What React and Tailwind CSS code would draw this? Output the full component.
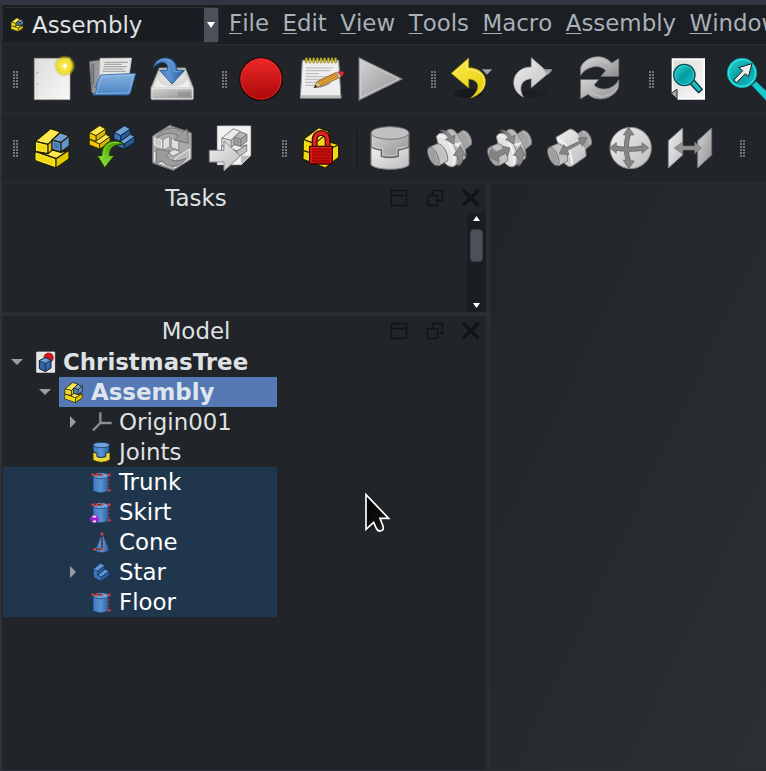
import React from 'react';

// Drawing units are a third of a pixel, measured from the origin (ox, oy).
function Icon({ x, y, w, h, ox = 0, oy = 0, children }) {
  return (
    <svg
      className="block shrink-0"
      width={w}
      height={h}
      viewBox={`${(x - ox) * 3} ${(y - oy) * 3} ${w * 3} ${h * 3}`}
      strokeLinejoin="round"
    >
      {children}
    </svg>
  );
}

function Defs() {
  return (
    <svg className="absolute" width="0" height="0">
      <defs>
        <linearGradient id="paper" x1="0" y1="0" x2="1" y2="1">
          <stop offset="0" stopColor="#dcdcda" />
          <stop offset="1" stopColor="#f8f8f8" />
        </linearGradient>
        <radialGradient id="glow">
          <stop offset="0" stopColor="#fffbd8" />
          <stop offset=".25" stopColor="#fbe94e" />
          <stop offset=".65" stopColor="#f2dc20" stopOpacity=".95" />
          <stop offset="1" stopColor="#b8a810" stopOpacity="0" />
        </radialGradient>
        <linearGradient id="blue" x1="0" y1="0" x2="0" y2="1">
          <stop offset="0" stopColor="#86b2e0" />
          <stop offset="1" stopColor="#4a83c4" />
        </linearGradient>
        <linearGradient id="deep" x1="0" y1="0" x2="1" y2="0">
          <stop offset="0" stopColor="#3f78bb" />
          <stop offset=".5" stopColor="#5b93d3" />
          <stop offset="1" stopColor="#28599a" />
        </linearGradient>
        <linearGradient id="red" x1="0" y1="0" x2="0" y2="1">
          <stop offset="0" stopColor="#ef2929" />
          <stop offset="1" stopColor="#a90808" />
        </linearGradient>
        <linearGradient id="gray" x1="0" y1="0" x2="1" y2="1">
          <stop offset="0" stopColor="#d4d4d4" />
          <stop offset="1" stopColor="#909090" />
        </linearGradient>
        <linearGradient id="light" x1="0" y1="0" x2="1" y2="1">
          <stop offset="0" stopColor="#f0f0f0" />
          <stop offset="1" stopColor="#bcbcbc" />
        </linearGradient>
        <linearGradient id="yellow" x1="0" y1="0" x2="1" y2="1">
          <stop offset="0" stopColor="#fce94f" />
          <stop offset="1" stopColor="#e5ce0a" />
        </linearGradient>
        <linearGradient id="cyan" x1="0" y1="0" x2="1" y2="1">
          <stop offset="0" stopColor="#2fdce0" />
          <stop offset=".5" stopColor="#079c9f" />
          <stop offset="1" stopColor="#16c4c8" />
        </linearGradient>
        <linearGradient id="green" x1="0" y1="0" x2="0" y2="1">
          <stop offset="0" stopColor="#4e9a06" />
          <stop offset="1" stopColor="#8ae234" />
        </linearGradient>
        <linearGradient id="cursor" x1="0" y1="0" x2="1" y2="1">
          <stop offset="0" stopColor="#000" />
          <stop offset=".7" stopColor="#111" />
          <stop offset="1" stopColor="#555" />
        </linearGradient>
      </defs>
    </svg>
  );
}

function Handle({ x, w, y, cx }) {
  const rows = [0, 3, 6, 9, 12, 15];
  return (
    <svg className="block shrink-0" width={w} height="68" viewBox={`${x} ${y} ${w} 68`} fill="#73767a">
      {rows.map((r) => (
        <g key={r}>
          <rect x={cx - 2} y={y + 26 + r} width="2" height="2" />
          <rect x={cx + 1} y={y + 26 + r} width="2" height="2" />
        </g>
      ))}
    </svg>
  );
}

function T1({ x, w, ox = 0, children }) {
  return <Icon x={x} y={45} w={w} h={68} ox={ox}>{children}</Icon>;
}
function T2({ x, w, ox = 0, children }) {
  return <Icon x={x} y={114} w={w} h={68} ox={ox} oy={110}>{children}</Icon>;
}

// Three stacked bricks of the assembly workbench
function Bricks({ y1 = '#fce94f', y2 = '#f0d90f', y3 = '#e2c800', b1 = '#729fcf', b2 = '#4377b8', b3 = '#5f93cf', s = '#211f00', sw = 3.5 }) {
  return (
    <g stroke={s} strokeWidth={sw}>
      <path d="M106 124L144 131 156 120 183 127 207 121 168 146Z" fill={y1} />
      <path d="M105 124L168 146V174L105 152Z" fill={y2} />
      <path d="M168 146L207 121V147L168 174Z" fill={y3} />
      <path d="M106 94L152 56 181 66 144 103Z" fill={y1} />
      <path d="M106 94L144 103V131L106 124Z" fill={y2} />
      <path d="M144 103L156 92V121L144 131Z" fill={y3} />
      <path d="M156 90L181 68 208 78 183 98Z" fill={b1} />
      <path d="M156 90L183 98V126L156 118Z" fill={b2} />
      <path d="M183 98L208 78V107L183 126Z" fill={b3} />
      <path d="M110 99L140 107V126L110 120ZM109 130L164 149V168L109 149Z" fill="none" stroke={y1} strokeWidth="2.5" />
      <path d="M160 95L179 101V120L160 114Z" fill="none" stroke={b1} strokeWidth="2.5" />
    </g>
  );
}

function StepBlock({ a, b, c, s }) {
  return (
    <g stroke={s} strokeWidth="2.5">
      <path d="M268 68L299 47 317 57 317 72 330 80 330 96 297 117 268 104Z" fill={b} />
      <path d="M268 68L299 47 317 57 288 77Z" fill={a} />
      <path d="M288 77L317 57V73L288 94Z" fill={c} />
      <path d="M268 68L288 77V94L268 88Z" fill={b} />
      <path d="M268 88L288 94 317 73 330 80 299 102Z" fill={a} />
      <path d="M268 88L299 102V117L268 104Z" fill={b} />
      <path d="M299 102L330 80V97L299 117Z" fill={c} />
    </g>
  );
}

function JointBase({ plain }) {
  return (
    <g stroke="#6e6e6e" strokeWidth="2.5">
      <path d="M588 74L608 61C623 61 637 82 635 103L612 122Z" fill="#a4a4a4" />
      <path d="M607 65C619 67 631 85 631 101" fill="none" stroke="#c4c4c4" strokeWidth="2.5" />
      {plain ? (
        <path d="M528 82L570 57C594 60 620 103 618 139L577 168C568 172 560 168 554 160Z" fill="url(#light)" stroke="#8a8a8a" />
      ) : (
        <>
          <path d="M560 62C572 53 584 60 591 72L606 96C616 116 620 133 616 145L584 168Z" fill="#b9b9b9" stroke="#8a8a8a" />
          <path d="M529 80C538 62 560 67 575 92C592 120 597 158 583 168C572 176 556 164 546 148Z" fill="#e2e2e2" stroke="#8a8a8a" />
          <path d="M582 102L606 96 592 112Z" fill="#f0f0f0" stroke="none" />
          <path d="M535 78C560 72 586 122 581 163" fill="none" stroke="#f8f8f8" strokeWidth="4" />
        </>
      )}
      {plain && <path d="M532 88C556 95 577 130 576 163" fill="none" stroke="#f6f6f6" strokeWidth="5" />}
      <path d="M509 111L532 101C549 100 566 130 563 153L535 168Z" fill="#c2c2c2" />
      <ellipse cx="520" cy="139" rx="13" ry="30" transform="rotate(-24 520 139)" fill="#9f9f9f" />
      <ellipse cx="520" cy="139" rx="10" ry="26" transform="rotate(-24 520 139)" fill="none" stroke="#b6b6b6" strokeWidth="2" />
    </g>
  );
}

function TurnArrows() {
  return (
    <g fill="#8b8b8b" stroke="#626262" strokeWidth="2">
      <path d="M539 61Q562 57 575 80L585 76 581 102 556 88 566 84Q558 68 539 61Z" />
      <path d="M594 169Q613 158 607 137L617 138 602 109 580 136 591 137Q598 153 594 169Z" />
    </g>
  );
}

function Toolbar1() {
  return (
    <div className="flex h-[69px] border-b border-[#2a2d33]">
      <Handle x={2} w={28} y={45} cx={15} />
      <T1 x={30} w={53}>
        <rect x="103" y="175" width="107" height="124" fill="url(#paper)" stroke="#aaa9a4" strokeWidth="2" />
        <path d="M111 178V296" stroke="#c9c9c6" />
        <path d="M110 218h5M110 252h5" stroke="#999" strokeWidth="3" />
        <circle cx="194" cy="198" r="33" fill="url(#glow)" />
        <path d="M194 190L197 196 203 198 197 201 194 207 191 201 185 198 191 196Z" fill="#fff" />
      </T1>
      <T1 x={83} w={59}>
        <path d="M268 184L301 180 303 278 280 282 274 274Z" fill="#999" stroke="#555" strokeWidth="2" />
        <path d="M276 191V270M281 190V255" stroke="#666" strokeWidth="3" />
        <path d="M300 175L395 174 384 251 289 263Q300 249 300 175Z" fill="#e5e5e3" stroke="#bbb" strokeWidth="2" />
        <path d="M314 187H384M312 193H365M311 200H381M309 207H370M307 214H377" stroke="#9b9b99" strokeWidth="3" />
        <path d="M282 263Q289 261 290 251L302 225 407 220 391 279Q389 285 381 285H279Q290 277 292 257Z" fill="url(#blue)" stroke="#2f64a5" strokeWidth="2.5" />
        <path d="M305 229L402 224 387 278 289 281Z" fill="none" stroke="#a2c6eb" strokeWidth="2" />
      </T1>
      <T1 x={142} w={60}>
        <path d="M478 204H556L580 263V296Q580 299 576 299H457Q453 299 453 295V263Z" fill="#d5d6d4" stroke="#8b8c8a" strokeWidth="3" />
        <path d="M483 209H551L572 262H461Z" fill="#ededeb" />
        <ellipse cx="517" cy="233" rx="43" ry="24" fill="#dededc" stroke="#c1c1bf" strokeWidth="2" />
        <path d="M456 266H577V296H456Z" fill="url(#gray)" stroke="#eee" strokeWidth="2" />
        <path d="M537 275v14M543 275v14M549 275v14M555 275v14M561 275v14M567 275v14" stroke="#777" strokeWidth="2" />
        <rect x="463" y="281" width="23" height="7" rx="3" fill="#bcbcba" />
        <path d="M460 204C464 163 533 163 530 210L554 211 516 252 479 211 502 210C508 182 477 180 460 204Z" fill="url(#deep)" stroke="#204a87" strokeWidth="2.5" />
        <path d="M470 188C484 170 523 172 523 215H543" fill="none" stroke="#82aee0" strokeWidth="2" />
      </T1>
      <Handle x={202} w={34} y={45} cx={224} />
      <T1 x={236} w={55} ox={200}>
        <circle cx="183" cy="237" r="64" fill="url(#red)" stroke="#260808" strokeWidth="4" />
        <circle cx="183" cy="237" r="60" fill="none" stroke="#ee3131" strokeWidth="2" />
      </T1>
      <T1 x={291} w={60} ox={200}>
        <path d="M307 181H416L423 294H301Z" fill="#eee" stroke="#8b8b88" strokeWidth="3" />
        <path d="M302 286L421 286 423 295H301Z" fill="#b9b9b5" />
        <path d="M318 204H399M317 212H390M317 221H357M317 230H396M316 238H389M315 247H394M315 256H350" stroke="#999" strokeWidth="2" />
        {[319, 330, 341, 352, 363, 374, 385, 396, 407].map((x) => (
          <rect key={x} x={x - 3} y="173" width="6" height="16" rx="2" fill="#dcc92a" stroke="#665c0d" strokeWidth="1.5" />
        ))}
        <path d="M341 264Q370 266 394 250L368 249Z" fill="#aaa" />
        <path d="M342 263L352 244 409 217 420 232 364 258Z" fill="#e9a63b" stroke="#6b4710" strokeWidth="2" />
        <path d="M356 247L411 221M360 253L416 226" stroke="#9e6518" strokeWidth="2" />
        <path d="M342 263L352 244 364 258Z" fill="#dfc58d" stroke="#4a3822" />
        <path d="M342 263L347 255 352 260Z" fill="#222" />
        <path d="M409 218L415 215 425 227 418 233Z" fill="#ccc" stroke="#777" />
        <path d="M414 216L424 214Q433 215 431 222L424 229Z" fill="#ef2929" stroke="#931b1b" strokeWidth="2" />
      </T1>
      <T1 x={351} w={60} ox={200}>
        <path d="M477 173L607 237 477 301Z" fill="url(#gray)" stroke="#797979" strokeWidth="3" />
        <path d="M482 180L597 237 482 293Z" fill="none" stroke="#cfcfcf" strokeWidth="3" />
      </T1>
      <Handle x={411} w={33} y={45} cx={433} />
      <T1 x={444} w={56} ox={200}>
        <ellipse cx="805" cy="280" rx="43" ry="13" fill="#17191d" />
        <path d="M845 208H877L861 224Z" fill="#9ba0a5" />
        <path d="M754 220L806 174V203C869 204 875 274 812 294C846 266 837 239 806 237V264Z" fill="url(#yellow)" stroke="#ad9800" strokeWidth="2" />
        <path d="M760 220L801 184V208C857 210 866 251 839 278" fill="none" stroke="#fff27b" strokeWidth="3" />
      </T1>
      <T1 x={500} w={66} ox={480}>
        <ellipse cx="155" cy="282" rx="45" ry="10" fill="#1c1e22" />
        <path d="M206 219L154 173V201C93 202 85 270 130 291C112 257 129 238 154 236V263Z" fill="url(#light)" stroke="#aaa" strokeWidth="2" />
        <path d="M188 208H218L205 224Z" fill="#9ba0a5" />
        <path d="M259 180V295" stroke="#191c20" strokeWidth="3" />
      </T1>
      <T1 x={566} w={69} ox={480}>
        <path d="M302 226V203C314 169 367 157 395 189L416 176V229H363L377 212C356 188 316 203 302 226Z" fill="url(#gray)" stroke="#888" strokeWidth="2" />
        <path d="M416 239V260C404 297 350 309 324 283L302 296V239H356L342 255C362 277 404 267 416 239Z" fill="url(#gray)" stroke="#888" strokeWidth="2" />
        <path d="M307 204C322 177 360 171 389 194M411 264C393 292 358 297 330 275M307 243H345" fill="none" stroke="#c9c9c9" strokeWidth="3" />
      </T1>
      <Handle x={635} w={31} y={45} cx={651} />
      <T1 x={666} w={50} ox={480}>
        <path d="M575 175H675V299H594L575 280Z" fill="#fff" />
        <path d="M580 181H670V294H600L580 276Z" fill="url(#paper)" />
        <path d="M573 280L591 268V297Z" fill="#aaa" stroke="#222" strokeWidth="3" />
        <path d="M632 244L641 239 667 268 656 278 631 252Z" fill="#18bfc3" stroke="#092d33" strokeWidth="4" />
        <circle cx="613" cy="225" r="32" fill="url(#cyan)" stroke="#0b4c51" strokeWidth="4" />
        <circle cx="613" cy="225" r="28" fill="none" stroke="#2cd4d8" strokeWidth="3" />
      </T1>
      <T1 x={716} w={50} ox={480}>
        <path d="M815 256L828 244 876 288 862 306Z" fill="#15cbd0" stroke="#0c6267" strokeWidth="3" />
        <circle cx="786" cy="219" r="44" fill="url(#cyan)" stroke="#10a5aa" strokeWidth="3" />
        <circle cx="786" cy="219" r="40" fill="none" stroke="#32e4e8" strokeWidth="4" />
        <path d="M762 240L788 212 776 203 816 191 805 230 796 221 769 248Z" fill="#eee" stroke="#222" strokeWidth="3" />
      </T1>
    </div>
  );
}

function Toolbar2() {
  return (
    <div className="flex h-[69px] border-b border-[#2a2d33]">
      <Handle x={2} w={28} y={114} cx={15} />
      <T2 x={30} w={51}><Bricks /></T2>
      <T2 x={81} w={60}>
        <StepBlock a="#fce94f" b="#edc90a" c="#d6b600" s="#2b2700" />
        <g transform="translate(74 0)"><StepBlock a="#729fcf" b="#3d74b7" c="#28599c" s="#0b1c33" /></g>
        <path d="M377 105C347 84 304 89 305 137L291 136 314 173 344 136 329 137C328 113 341 100 377 105Z" fill="url(#green)" stroke="#17330a" strokeWidth="3" />
        <path d="M357 98C328 93 310 108 311 142H300L314 164" fill="none" stroke="#8ae234" strokeWidth="3" />
      </T2>
      <T2 x={141} w={60}>
        <path d="M458 78L509 46 574 69V147L520 181 458 159Z" fill="#aaa" stroke="#777" strokeWidth="3" />
        <path d="M463 83L485 91V113L463 105ZM463 128L513 147V171L463 153Z" fill="#c8c8c8" stroke="#eee" strokeWidth="3" />
        <path d="M524 146L569 117V145L524 174Z" fill="#bbb" stroke="#eee" strokeWidth="3" />
        <path d="M489 89L509 79V111L489 120ZM514 85L536 92V120L514 113Z" fill="#dedede" stroke="#777" strokeWidth="2" />
        <path d="M502 125L524 119 542 126 519 138Z" fill="#e2e2e2" stroke="#777" strokeWidth="2" />
        <path d="M469 86C488 49 528 46 546 67L561 58 565 100 523 90 535 79C516 63 488 69 469 86Z" fill="#9c9c9c" stroke="#747474" strokeWidth="3" />
        <path d="M558 145C536 178 501 174 487 153L468 159 470 117 511 124 499 137C512 156 533 156 558 145Z" fill="#9c9c9c" stroke="#747474" strokeWidth="3" />
      </T2>
      <T2 x={201} w={60}>
        <path d="M652 48H752V136L724 164H652Z" fill="#f2f2f2" stroke="#ddd" strokeWidth="2" />
        <path d="M723 164V137H752Z" fill="#bbb" stroke="#ddd" strokeWidth="2" />
        <g transform="translate(587 15) scale(.74)"><Bricks y1="#e9e9e9" y2="#d2d2d2" y3="#c0c0c0" b1="#b5b5b5" b2="#919191" b3="#a2a2a2" s="#747474" /></g>
        <path d="M628 121H672V93L721 138 672 183V156H628Z" fill="url(#light)" stroke="#8c8c8c" strokeWidth="3" />
      </T2>
      <Handle x={261} w={33} y={114} cx={284} />
      <T2 x={294} w={60} ox={260}>
        <g stroke="#211f00" strokeWidth="3.500">
          <path d="M130 88L176 53 208 65V96L236 104V142L196 174 129 148Z" fill="#f0d90f" />
          <path d="M130 88L176 53 208 65 164 101Z" fill="#fce94f" />
          <path d="M130 122L150 128M205 108L217 113 236 104M217 113V158" fill="none" />
        </g>
        <path d="M164 109V91C164 62 203 62 203 91V109" fill="none" stroke="#3c0505" strokeWidth="18" />
        <path d="M164 109V91C164 62 203 62 203 91V109" fill="none" stroke="#e12222" strokeWidth="11" />
        <rect x="149" y="109" width="68" height="53" fill="#cc0d0d" stroke="#3c0505" strokeWidth="4" />
        <path d="M156 117H210M156 126H210M156 135H210M156 144H210M156 153H210" stroke="#8d0909" strokeWidth="3" />
        <path d="M153 158V113H213" fill="none" stroke="#ef2d2d" strokeWidth="3" />
      </T2>
      <T2 x={354} w={66} ox={260}>
        <path d="M292 57V173" stroke="#191c20" strokeWidth="3" />
        <path d="M333 111V165C350 182 431 182 447 165V111Z" fill="url(#light)" stroke="#858585" strokeWidth="3" />
        <path d="M333 68V111C342 117 353 119 364 120V139Q390 146 415 139V120C430 118 440 115 447 111V68Z" fill="url(#gray)" stroke="#666" strokeWidth="4" />
        <ellipse cx="390" cy="69" rx="57" ry="19" fill="#c1c1c1" stroke="#777" strokeWidth="3" />
        <path d="M338 76V107Q352 114 369 115V134Q390 140 410 134V115Q432 113 442 107" fill="none" stroke="#d6d6d6" strokeWidth="2" />
      </T2>
      <T2 x={420} w={60} ox={260}><JointBase /><TurnArrows /></T2>
      <T2 x={480} w={60} ox={320}>
        <JointBase /><TurnArrows />
        <path d="M513 119L525 128 550 116 546 108 570 114 563 139 557 130 533 143 536 154 508 142Z" fill="#858585" stroke="#666" strokeWidth="2" />
      </T2>
      <T2 x={540} w={60} ox={500}>
        <g transform="translate(-360 0)"><JointBase plain /></g>
        <path d="M178 132L191 104 200 112 238 94 235 83 261 83 248 109 241 100 203 121 207 134Z" fill="#858585" stroke="#666" strokeWidth="2" />
      </T2>
      <T2 x={600} w={60} ox={500}>
        <circle cx="392" cy="114" r="62" fill="url(#light)" stroke="#8b8b8b" strokeWidth="3" />
        <path d="M344 114Q390 122 430 114M386 70Q372 112 386 158" fill="none" stroke="#656565" strokeWidth="15" />
        <path d="M386 51L402 75H370ZM386 176L403 153 370 150ZM329 113L349 98V130ZM446 113L426 98V130Z" fill="#858585" stroke="#656565" strokeWidth="2" />
        <path d="M342 114Q390 122 432 114M386 66Q372 112 386 162" fill="none" stroke="#858585" strokeWidth="11" />
      </T2>
      <T2 x={660} w={60} ox={500}>
        <path d="M505 92L548 54V135L505 174Z" fill="url(#light)" stroke="#888" strokeWidth="3" />
        <path d="M593 92L635 54V135L593 174Z" fill="url(#gray)" stroke="#777" strokeWidth="3" />
        <path d="M523 114L548 96V108H584V96L604 114 584 131V120H548V131Z" fill="#929292" stroke="#707070" strokeWidth="2" />
      </T2>
      <Handle x={720} w={46} y={114} cx={742} />
    </div>
  );
}

function DockTitle({ children }) {
  return (
    <div className="flex h-[30px] w-full items-center">
      <div className="w-[388px] text-center leading-[30px] text-[#dfe1e3]">{children}</div>
      <svg className="block" width="96" height="30" viewBox="390 183 96 30" fill="none" stroke="#111315">
        <path d="M391.500 190.500H406.500V205.500H391.500ZM391.500 195.500H406.500" strokeWidth="1.300" />
        <path d="M427.500 195.500H437.500V205.500H427.500ZM432.500 195V190.500H442.500V200.500H438" strokeWidth="1.300" />
        <path d="M464 191L477.500 204.500M477.500 191L464 204.500" strokeWidth="3.200" strokeLinecap="round" />
      </svg>
    </div>
  );
}

function BlueCylinder({ children }) {
  return (
    <>
      <path d="M279 49V92Q300 104 327 93V48Z" fill="url(#deep)" stroke="#173b69" strokeWidth="2" />
      <ellipse cx="303" cy="47" rx="23" ry="9" fill="#6ea2dc" stroke="#173b69" strokeWidth="2" />
      <path d="M278 44H304M328 45V91" stroke="#31191b" strokeWidth="4" />
      <path d="M278 44H304M328 45V91" stroke="#d04740" strokeWidth="2" strokeDasharray="7 4" />
      {[[278, 44], [290, 44], [304, 44], [328, 44], [328, 91]].map(([x, y]) => (
        <circle key={`${x}-${y}`} cx={x} cy={y} r="4" fill="#e0483f" stroke="#741d1b" />
      ))}
      {children}
    </>
  );
}

function Row({ y, ix, tri, cls = '', label, oy = 460, icon, pad, tx }) {
  return (
    <div className={`ml-px flex h-[30px] w-[274px] items-center ${cls}`}>
      <div className={`${pad} flex h-[30px] shrink-0 items-center justify-end`}>
        {tri === 'open' && <svg width="12" height="6" viewBox="0 0 12 6"><path d="M0 0H12L6 6Z" fill="#9a9da0" /></svg>}
        {tri === 'shut' && <svg width="6" height="12" viewBox="0 0 6 12"><path d="M0 0V12L6 6Z" fill="#9a9da0" /></svg>}
      </div>
      <Icon x={ix} y={y} w={24} h={30} oy={oy}>{icon}</Icon>
      <span className={`whitespace-nowrap leading-[30px] ${tx}`}>{label}</span>
    </div>
  );
}

function Tree() {
  return (
    <div className="flex flex-col text-[#dfe1e3]">
      <Row y={347} ix={34} oy={340} tri="open" pad="w-[31px] pr-[11px]" tx="pl-[5px] font-bold" label="ChristmasTree"
        icon={<>
          <rect x="110" y="36" width="54" height="61" fill="#e4e4e4" stroke="#fff" strokeWidth="2" />
          <circle cx="146" cy="53" r="14" fill="#d81818" stroke="#6c0c0c" strokeWidth="2" />
          <path d="M118 62L136 53 153 60V84L136 95 118 86Z" fill="#3465a4" stroke="#0b203d" strokeWidth="3" />
          <path d="M118 62L136 53 153 60 136 70Z" fill="#729fcf" stroke="#0b203d" strokeWidth="2" />
          <path d="M136 70V95" stroke="#0b203d" strokeWidth="2" />
        </>} />
      <div className="flex h-[30px]">
        <div className="flex w-[57px] items-center pl-[37px]">
          <svg width="12" height="6" viewBox="0 0 12 6"><path d="M0 0H12L6 6Z" fill="#9a9da0" /></svg>
        </div>
        <div className="flex w-[218px] items-center bg-[#5479b5] pl-[3px]">
          <Icon x={62} y={377} w={24} h={30} oy={340}>
            <g transform="translate(141 99) scale(.51)"><Bricks sw={4.5} /></g>
          </Icon>
          <span className="pl-[5px] font-bold leading-[30px] text-[#dfe5ee]">Assembly</span>
        </div>
      </div>
      <Row y={407} ix={90} oy={340} tri="shut" pad="w-[87px] pr-[14px]" tx="pl-[5px]" label="Origin001"
        icon={<path d="M301 217V249L279 271M301 249H335" fill="none" stroke="#8d8d89" strokeWidth="7" />} />
      <Row y={437} ix={90} oy={340} pad="w-[87px]" tx="pl-[5px]" label="Joints"
        icon={<>
          <path d="M279 337V360Q302 374 330 360V337Z" fill="#edd83a" stroke="#403900" strokeWidth="3" />
          <path d="M279 314V334Q284 339 291 340V350Q303 355 317 350V340Q326 338 329 334V314Z" fill="url(#deep)" stroke="#0c2747" strokeWidth="3" />
          <ellipse cx="304" cy="315" rx="25" ry="8" fill="#6ea2dc" stroke="#0c2747" strokeWidth="2" />
        </>} />
      <Row y={467} ix={90} cls="bg-[#20364c] text-white" pad="w-[87px]" tx="pl-[5px]" label="Trunk" icon={<BlueCylinder />} />
      <Row y={467} ix={90} cls="bg-[#20364c] text-white" pad="w-[87px]" tx="pl-[5px]" label="Skirt"
        icon={<BlueCylinder>
          <circle cx="283" cy="87" r="13" fill="#9b22cf" />
          <path d="M278 80H289M279 94H288" stroke="#eee" strokeWidth="5" />
        </BlueCylinder>} />
      <Row y={527} ix={90} cls="bg-[#20364c] text-white" pad="w-[87px]" tx="pl-[5px]" label="Cone"
        icon={<>
          <path d="M307 219L328 271Q309 284 285 272Z" fill="url(#deep)" stroke="#173b69" strokeWidth="2" />
          <path d="M306 221V268H284" fill="none" stroke="#42171b" strokeWidth="4" />
          <path d="M306 221V268H284" fill="none" stroke="#d04740" strokeWidth="2" strokeDasharray="7 4" />
          <circle cx="306" cy="221" r="4" fill="#e0483f" /><circle cx="306" cy="268" r="4" fill="#e0483f" /><circle cx="284" cy="268" r="4" fill="#e0483f" />
        </>} />
      <Row y={557} ix={90} cls="bg-[#20364c] text-white" tri="shut" pad="w-[87px] pr-[14px]" tx="pl-[5px]" label="Star"
        icon={<g stroke="#102c4f" strokeWidth="2">
          <path d="M280 327L302 310 315 317V328L328 334V346L303 364 280 351Z" fill="#3c76ba" />
          <path d="M280 327L302 310 315 317 293 334Z" fill="#5f96d2" />
          <path d="M293 334L315 317V328L293 346Z" fill="#2c5f9f" />
          <path d="M293 346L315 328 328 334 304 351Z" fill="#5f96d2" />
          <path d="M304 351L328 334V346L304 364Z" fill="#2c5f9f" />
        </g>} />
      <Row y={467} ix={90} cls="bg-[#20364c] text-white" pad="w-[87px]" tx="pl-[5px]" label="Floor" icon={<BlueCylinder />} />
    </div>
  );
}

const menus = [['F', 'ile'], ['E', 'dit'], ['V', 'iew'], ['T', 'ools'], ['M', 'acro'], ['A', 'ssembly'], ['W', 'indow']];

export default function App() {
  return (
    <div className="relative flex h-[771px] w-[766px] flex-col overflow-hidden border-l-2 border-t-[5px] border-l-[#2d313b] border-t-[#303541] bg-[#212429] font-['DejaVu_Sans',sans-serif] text-[22.9px]">
      <Defs />
      <div className="flex h-10 shrink-0 border-b border-[#2a2d33] bg-[#1b1e22]">
        <div className="mt-[2px] flex h-[36px] w-[217px] shrink-0 items-center rounded-sm border border-[#2a2d33] bg-[#1a1d21] text-[#dfe1e3]">
          <Icon x={5} y={10} w={28} h={30}>
            <g transform="translate(2 35) scale(.353 .34)"><Bricks sw={5} /></g>
          </Icon>
          <span className="w-[173px] pl-px leading-[34px]">Assembly</span>
          <div className="flex h-[34px] w-[14px] items-center justify-center bg-[#4b515a]">
            <svg width="8" height="6" viewBox="0 0 8 6"><path d="M0 0H8L4 6Z" fill="#fff" /></svg>
          </div>
        </div>
        <div className="flex gap-[13.5px] pl-[10px] leading-[36px] text-[#a9b1b7] [font-kerning:none]">
          {menus.map(([a, b]) => (
            <span key={a} className="whitespace-nowrap">
              <span className="underline decoration-1 underline-offset-2">{a}</span>{b}
            </span>
          ))}
        </div>
      </div>
      <Toolbar1 />
      <Toolbar2 />
      <div className="flex min-h-0 flex-1">
        <div className="flex w-[484px] shrink-0 flex-col border-b border-[#2a2d33]">
          <DockTitle>Tasks</DockTitle>
          <div className="flex h-[99px] shrink-0 justify-end">
            <div className="flex w-[19px] flex-col items-center rounded-sm bg-[#1a1d21] pb-1 pt-[3px]">
              <svg width="7" height="5" viewBox="0 0 7 5"><path d="M0 5H7L3.500 0Z" fill="#fff" /></svg>
              <div className="mt-2 h-[33px] w-[13px] rounded-sm border border-[#3b4148] bg-[#4a515a]" />
              <svg className="mt-auto" width="7" height="5" viewBox="0 0 7 5"><path d="M0 0H7L3.500 5Z" fill="#fff" /></svg>
            </div>
          </div>
          <div className="h-1 shrink-0 bg-[#2a2d32]" />
          <DockTitle>Model</DockTitle>
          <div className="pt-px"><Tree /></div>
        </div>
        <div className="w-1 shrink-0 bg-[#2a2d32]" />
        <div className="flex-1 border-b border-[#2a2d33] bg-gradient-to-br from-[#212429] to-[#2b3032]" />
      </div>
      <svg className="absolute left-[356px] top-[485px]" width="34" height="46" viewBox="54 30 102 138">
        <path d="M81 50L148 116H122L131 138Q134 151 124 153Q116 155 111 143L103 130 81 150Z" fill="#15171a" opacity=".65" transform="translate(3 5)" />
        <path d="M78 44L146 115H120L129 138Q133 151 122 153Q113 155 108 143L101 127 78 148Z" fill="url(#cursor)" stroke="#fff" strokeWidth="5" strokeLinejoin="miter" />
      </svg>
    </div>
  );
}
